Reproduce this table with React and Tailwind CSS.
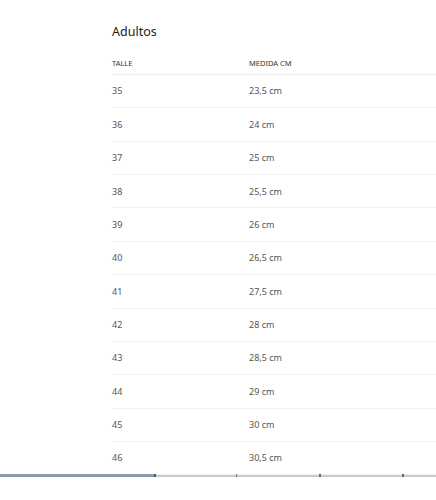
import React from "react";

const sizes = [
  ["35", "23,5 cm"],
  ["36", "24 cm"],
  ["37", "25 cm"],
  ["38", "25,5 cm"],
  ["39", "26 cm"],
  ["40", "26,5 cm"],
  ["41", "27,5 cm"],
  ["42", "28 cm"],
  ["43", "28,5 cm"],
  ["44", "29 cm"],
  ["45", "30 cm"],
  ["46", "30,5 cm"],
];

export default function App() {
  return (
    <div className="relative w-[436px] h-[500px] bg-white overflow-hidden font-['Noto_Sans',sans-serif]">
      <div className="pl-[112px] pt-[24px]">
        <p className="text-[12.5px] leading-[16px] text-[#222] mb-[14px]">Adultos</p>
        <div className="flex items-center h-[21px] border-b border-[#eeeeee] text-[7.5px] uppercase text-[#333] pb-[1px]">
          <span className="w-[137px]">Talle</span>
          <span>Medida cm</span>
        </div>
        {sizes.map(([talle, medida]) => (
          <div
            key={talle}
            className="flex items-center h-[33.36px] border-b border-[#f0f0f0] text-[9px] text-[#555]"
          >
            <span className="w-[137px]">{talle}</span>
            <span>{medida}</span>
          </div>
        ))}
      </div>

      {/* scrollbar strip at the bottom */}
      <div className="absolute left-0 right-0 top-[474px] flex items-center">
        <div className="w-[155px] h-[3px] bg-[#8e9ab0]" />
        <div className="flex-1 h-[2px] bg-[#c6cad1]" />
      </div>
      <div className="absolute top-[474px] left-[154px] w-[2px] h-[3px] bg-[#555]" />
      <div className="absolute top-[474px] left-[236px] w-[1px] h-[3px] bg-[#777]" />
      <div className="absolute top-[474px] left-[319px] w-[2px] h-[3px] bg-[#666]" />
      <div className="absolute top-[474px] left-[402px] w-[2px] h-[3px] bg-[#666]" />
    </div>
  );
}
